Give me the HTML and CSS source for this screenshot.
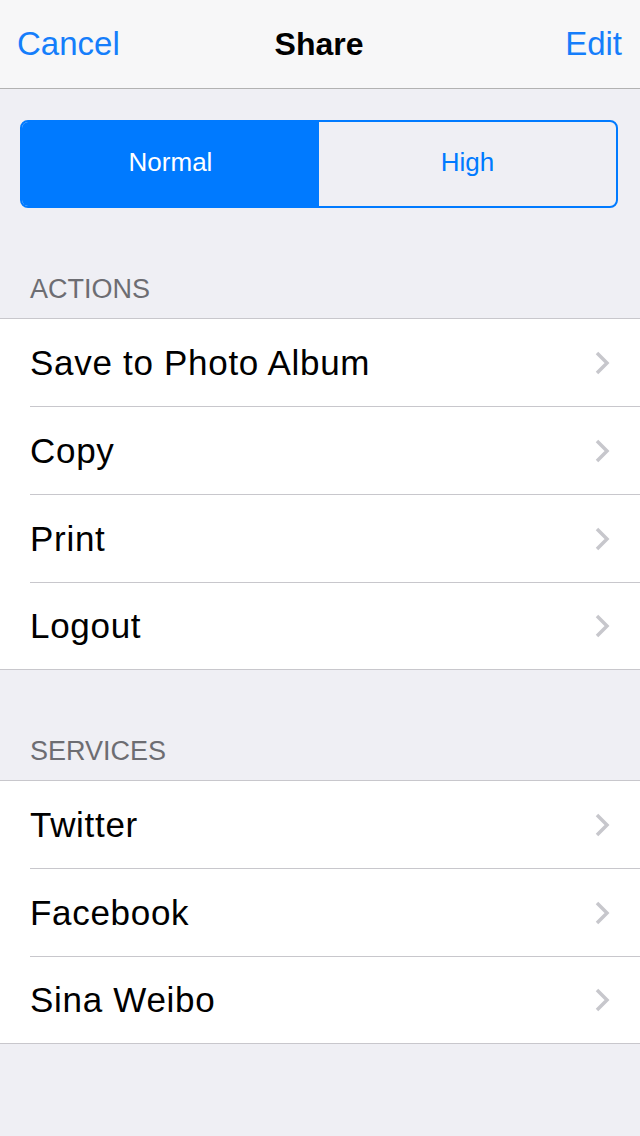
FILE: index.html
```html
<!DOCTYPE html>
<html lang="en">
<head>
    <meta charset="UTF-8">
    <meta name="viewport" content="width=device-width, initial-scale=1.0">
    <title>Share</title>
    <link rel="stylesheet" href="styles.css">
</head>
<body>
    <div class="navbar">
        <a class="nav-button">Cancel</a>
        <div class="nav-title">Share</div>
        <a class="nav-button right">Edit</a>
    </div>

    <div class="segmented">
        <div class="segment active">Normal</div>
        <div class="segment">High</div>
    </div>

    <div class="section-header">ACTIONS</div>
    <ul class="group">
        <li class="row"><span>Save to Photo Album</span><svg class="chevron" viewBox="0 0 16 26"><path d="M3 3l10 10-10 10"/></svg></li>
        <li class="row"><span>Copy</span><svg class="chevron" viewBox="0 0 16 26"><path d="M3 3l10 10-10 10"/></svg></li>
        <li class="row"><span>Print</span><svg class="chevron" viewBox="0 0 16 26"><path d="M3 3l10 10-10 10"/></svg></li>
        <li class="row"><span>Logout</span><svg class="chevron" viewBox="0 0 16 26"><path d="M3 3l10 10-10 10"/></svg></li>
    </ul>

    <div class="section-header">SERVICES</div>
    <ul class="group">
        <li class="row"><span>Twitter</span><svg class="chevron" viewBox="0 0 16 26"><path d="M3 3l10 10-10 10"/></svg></li>
        <li class="row"><span>Facebook</span><svg class="chevron" viewBox="0 0 16 26"><path d="M3 3l10 10-10 10"/></svg></li>
        <li class="row"><span>Sina Weibo</span><svg class="chevron" viewBox="0 0 16 26"><path d="M3 3l10 10-10 10"/></svg></li>
    </ul>
</body>
</html>
```

FILE: styles.css
```css
body {
    font-family: "Liberation Sans", Arial, sans-serif;
    margin: 0;
    padding: 0;
    background-color: #efeff4;
    min-height: 1136px;
}
.navbar {
    display: grid;
    grid-template-columns: 1fr auto 1fr;
    align-items: center;
    height: 88px;
    padding: 0 18px 0 17px;
    background-color: #f7f7f8;
    border-bottom: 1px solid #b2b2b2;
}
.nav-button {
    font-size: 33px;
    color: #157efb;
    cursor: pointer;
}
.nav-button.right {
    justify-self: end;
}
.nav-title {
    font-size: 32px;
    font-weight: bold;
    color: #000;
    margin-left: -1px;
}
.segmented {
    display: flex;
    margin: 31px 22px 0 20px;
    height: 84px;
    border: 2px solid #007aff;
    border-radius: 8px;
    overflow: hidden;
}
.segment {
    flex: 1;
    display: flex;
    align-items: center;
    justify-content: center;
    padding-bottom: 3px;
    font-size: 26px;
    color: #007aff;
}
.segment.active {
    background-color: #007aff;
    color: #fff;
}
.section-header {
    padding: 65px 30px 13px;
    font-size: 27px;
    line-height: 32px;
    color: #6d6d72;
}
.group {
    list-style: none;
    margin: 0;
    padding: 0 0 0 30px;
    background-color: #fff;
    border-top: 1px solid #c8c7cc;
    border-bottom: 1px solid #c8c7cc;
}
.row {
    display: flex;
    align-items: center;
    justify-content: space-between;
    height: 87px;
    padding-right: 30px;
    font-size: 35px;
    letter-spacing: 0.7px;
    color: #000;
    border-bottom: 1px solid #c8c7cc;
}
.row:last-child {
    border-bottom: none;
    height: 86px;
}
.chevron {
    width: 16px;
    height: 26px;
    fill: none;
    stroke: #c7c7cc;
    stroke-width: 3.5;
}
```
